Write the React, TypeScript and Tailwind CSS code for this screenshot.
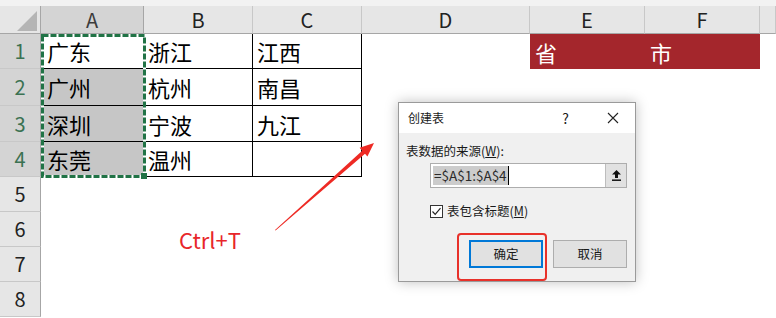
const FONT = { fontFamily: '"Noto Sans CJK SC", "Noto Sans", sans-serif' };

const colWidths = ["w-[103px]", "w-[109px]", "w-[109px]", "w-[168px]", "w-[115px]", "w-[115px]", "flex-1"];
const colLetters = ["A", "B", "C", "D", "E", "F", ""];
const rowHeights = ["h-[35px]", "h-[37px]", "h-[36px]", "h-[35px]", "h-[35px]", "h-[35px]", "h-[35px]", "h-[35px]"];

const data: string[][] = [
  ["广东", "浙江", "江西", "", "省", "市", ""],
  ["广州", "杭州", "南昌", "", "", "", ""],
  ["深圳", "宁波", "九江", "", "", "", ""],
  ["东莞", "温州", "", "", "", "", ""],
  ["", "", "", "", "", "", ""],
  ["", "", "", "", "", "", ""],
  ["", "", "", "", "", "", ""],
  ["", "", "", "", "", "", ""],
];

function cellClass(r: number, c: number) {
  let cls = "flex items-center text-[22px] text-black leading-none ";
  if (c <= 2 && r <= 3) cls += "border-r border-b border-black pl-1 ";
  if (c === 0) cls += "pl-[6px] ";
  if (c === 0 && r > 0 && r <= 3) cls += "bg-[#c6c6c6] ";
  if (r === 0 && (c === 4 || c === 5)) cls += "bg-[#a4262c] text-white pl-[5px] ";
  return cls;
}

function Sheet() {
  return (
    <div className="flex flex-col">
      {/* 顶部条 + 列标题 */}
      <div className="flex h-[34px] bg-[#f2f2f2]">
        <div className="w-[41px] flex flex-col">
          <div className="h-[6px]" />
          <div className="flex-1 bg-[#e6e6e6] border-b border-r border-[#a6a6a6] relative">
            <svg className="absolute left-0 top-0" width="41" height="28" viewBox="0 0 41 28">
              <polygon points="17,25 37,25 37,5" fill="#b5b5b5" />
            </svg>
          </div>
        </div>
        {colLetters.map((l, i) => (
          <div key={i} className={`${colWidths[i]} flex flex-col`}>
            <div className="h-[6px]" />
            <div
              className={`flex-1 flex items-center justify-center text-[20px] leading-none border-b border-r border-[#a6a6a6] ${
                i === 0 ? "bg-[#d4d4d4] text-[#3c3c3c]" : "bg-[#e6e6e6] text-[#222] border-r-[#c8c8c8]"
              }`}
            >
              {l}
            </div>
          </div>
        ))}
      </div>
      {data.map((row, r) => (
        <div key={r} className={`flex ${rowHeights[r]}`}>
          <div
            className={`w-[41px] flex items-center justify-center text-[20px] leading-none border-r border-[#a6a6a6] border-b border-b-[#c8c8c8] ${
              r <= 3 ? "bg-[#d4d4d4] text-[#3b7252]" : "bg-[#e6e6e6] text-[#222]"
            }`}
          >
            {r + 1}
          </div>
          {row.map((v, c) => (
            <div key={c} className={`${colWidths[c]} ${cellClass(r, c)}`}>
              {v}
            </div>
          ))}
        </div>
      ))}
    </div>
  );
}

function Dialog() {
  return (
    <div className="absolute left-[398px] top-[102px] w-[238px] h-[180px] bg-[#f0f0f0] border border-[#9a9a9a] shadow-[0_0_12px_rgba(0,0,0,0.25)] flex flex-col text-[#1a1a1a]">
      <div className="h-[30px] bg-white flex items-center pl-[9px] pr-[16px] text-[12px]">
        <span className="flex-1">创建表</span>
        <span className="text-[14px] mr-[38px]">?</span>
        <svg width="12" height="12" viewBox="0 0 12 12">
          <path d="M1 1 L11 11 M11 1 L1 11" stroke="#222" strokeWidth="1.1" />
        </svg>
      </div>
      <div className="flex flex-col pl-[7px] pr-[8px] pt-[9px]">
        <div className="text-[12.5px] leading-[18px]">
          表数据的来源(<span className="underline">W</span>):
        </div>
        <div className="ml-[24px] mt-[3px] h-[25px] flex bg-white border border-[#adadad]">
          <div className="flex-1 flex items-center pl-[2px]">
            <span className="bg-[#cccccc] text-[13.5px] leading-[19px] text-[#2a2a2a] px-[1px]">=$A$1:$A$4</span>
            <span className="w-[1px] h-[19px] bg-black" />
          </div>
          <div className="w-[21px] bg-[#e1e1e1] border-l border-[#bdbdbd] flex items-center justify-center">
            <svg width="11" height="13" viewBox="0 0 11 13">
              <polygon points="5.5,1 10,5.5 7,5.5 7,9 4,9 4,5.5 1,5.5" fill="#111" />
              <path d="M1 11.2 H10" stroke="#111" strokeWidth="1.5" />
            </svg>
          </div>
        </div>
        <div className="ml-[24px] mt-[14px] flex items-center gap-[4px] h-[18px]">
          <div className="w-[13px] h-[13px] bg-white border border-[#333] flex items-center justify-center">
            <svg width="11" height="11" viewBox="0 0 11 11">
              <path d="M1.5 5.5 L4.2 8.3 L9.5 2.2" stroke="#222" strokeWidth="1.2" fill="none" />
            </svg>
          </div>
          <span className="text-[12.5px] leading-[18px]">
            表包含标题(<span className="underline">M</span>)
          </span>
        </div>
        <div className="mt-[20px] flex justify-end gap-[10px]">
          <div className="relative w-[74px] h-[28px] bg-[#e1e1e1] border-2 border-[#0078d7] flex items-center justify-center text-[12.5px]">
            确定
            <div className="absolute left-[-14px] top-[-9px] w-[90px] h-[48px] rounded-[4px] border-2 border-[#e8312a]" />
          </div>
          <div className="w-[74px] h-[28px] bg-[#e1e1e1] border border-[#adadad] flex items-center justify-center text-[12.5px]">
            取消
          </div>
        </div>
      </div>
    </div>
  );
}

export default function App() {
  return (
    <div className="relative w-[776px] h-[318px] overflow-hidden bg-white" style={FONT}>
      <Sheet />

      {/* 选区虚线框 */}
      <svg className="absolute left-[40px] top-[33px] pointer-events-none" width="107" height="146" viewBox="0 0 107 146">
        <rect x="2.5" y="2.5" width="102" height="141" fill="none" stroke="#ffffff" strokeWidth="3" />
        <rect x="2.5" y="2.5" width="102" height="141" fill="none" stroke="#217346" strokeWidth="3" strokeDasharray="6 2" />
        <rect x="101" y="140" width="6" height="6" fill="#217346" />
      </svg>

      {/* 箭头 */}
      <svg className="absolute left-0 top-0 pointer-events-none" width="776" height="318" viewBox="0 0 776 318">
        <polygon
          points="275,230 362.2,150.7 359.6,147.8 374,143 367.4,156.6 365,153.8 275.6,230.5"
          fill="#ee2a24"
        />
      </svg>

      <div className="absolute left-[179px] top-[228px] text-[22px] leading-none text-[#e8262a]">Ctrl+T</div>

      <Dialog />
    </div>
  );
}
